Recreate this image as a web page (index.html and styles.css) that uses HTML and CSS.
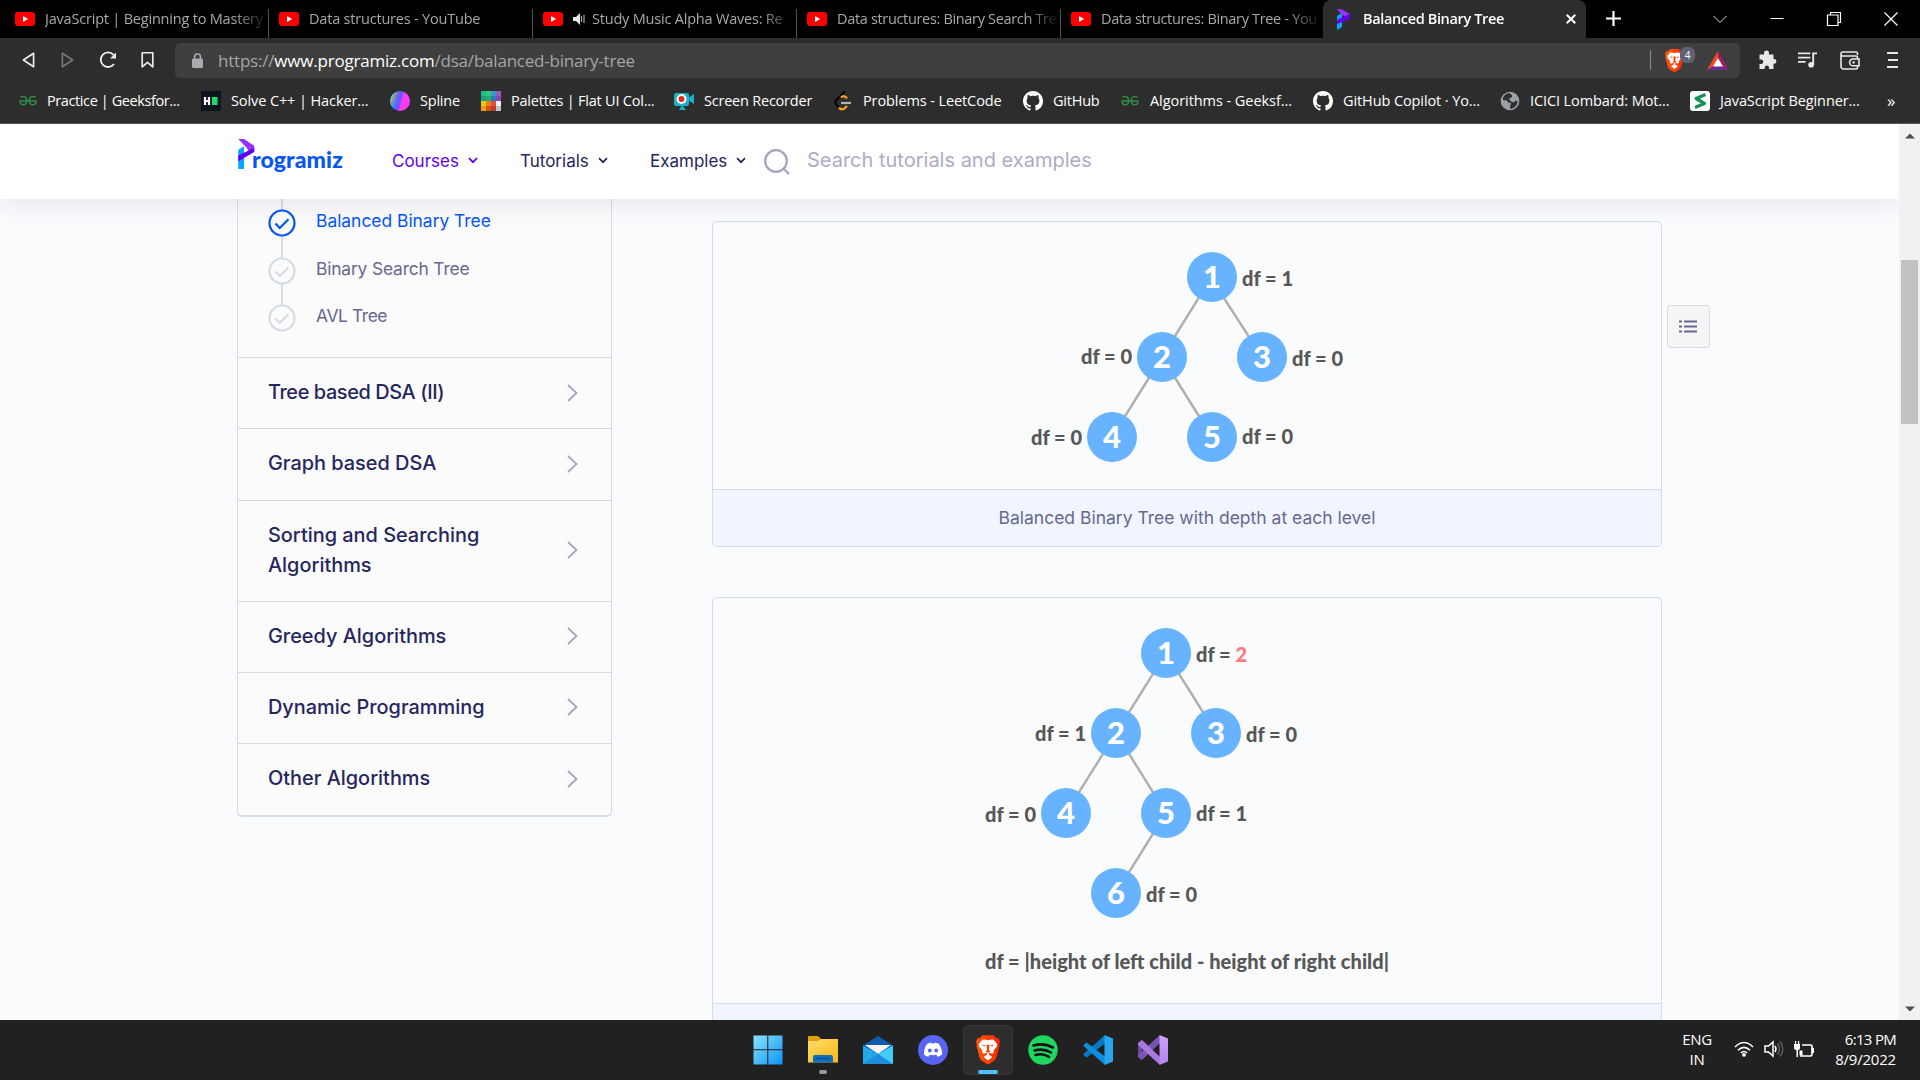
FILE: index.html
```html
<!DOCTYPE html>
<html lang="en">
<head>
<meta charset="utf-8">
<title>Balanced Binary Tree</title>
<link rel="stylesheet" href="styles.css">
</head>
<body>
<svg width="0" height="0" class="defs" aria-hidden="true">
  <defs>
    <linearGradient id="gWin" x1="0" y1="0" x2="1" y2="1"><stop offset="0" stop-color="#8be4ff"/><stop offset="1" stop-color="#0b93f5"/></linearGradient>
    <linearGradient id="gFolder" x1="0" y1="0" x2="1" y2="1"><stop offset="0" stop-color="#ffdc6b"/><stop offset="1" stop-color="#fbb914"/></linearGradient>
    <linearGradient id="gBrave" x1="0" y1="0" x2="1" y2="0"><stop offset="0" stop-color="#ff5a0a"/><stop offset="1" stop-color="#fb2500"/></linearGradient>
    <linearGradient id="gSpline" x1="0" y1="0" x2="1" y2=".3"><stop offset="0" stop-color="#ffd84a"/><stop offset=".22" stop-color="#25d6e6"/><stop offset=".42" stop-color="#4a70ff"/><stop offset=".6" stop-color="#7a4dff"/><stop offset=".72" stop-color="#ff3cf0"/><stop offset="1" stop-color="#f63cf5"/></linearGradient>
    <linearGradient id="gVs" x1="0" y1="0" x2="0" y2="1"><stop offset="0" stop-color="#c9a2fb"/><stop offset="1" stop-color="#b583ee"/></linearGradient>
    <symbol id="youtube" viewBox="0 0 20 14"><rect width="20" height="14" rx="3" fill="#f00"/><path d="M8 4l5.200 3L8 10z" fill="#fff"/></symbol>
    <symbol id="gfg" viewBox="0 0 18 11"><g fill="none" stroke="#2f8d46" stroke-width="1.500"><path d="M1.500 2.200C3.500.8 7.600 1 7.600 5.400 7.600 8.400 6 9.800 4.200 9.800 2.200 9.800 1 8.200 1 5.900H17C17 8.200 15.800 9.800 13.800 9.800 12 9.800 10.400 8.400 10.400 5.400 10.400 1 14.500.8 16.500 2.200"/></g></symbol>
    <symbol id="github" viewBox="0 0 16 16"><path fill="#fff" d="M8 0C3.580 0 0 3.580 0 8c0 3.540 2.290 6.530 5.470 7.590.4.070.55-.17.55-.38 0-.19-.01-.82-.01-1.490-2.010.37-2.530-.49-2.690-.94-.09-.23-.48-.94-.82-1.130-.28-.15-.68-.52-.01-.53.63-.01 1.080.58 1.230.82.72 1.210 1.870.87 2.330.66.07-.52.28-.87.51-1.070-1.780-.2-3.640-.89-3.640-3.950 0-.87.31-1.590.82-2.150-.08-.2-.36-1.020.08-2.120 0 0 .67-.21 2.200.82.64-.18 1.320-.27 2-.27s1.360.09 2 .27c1.530-1.040 2.200-.82 2.200-.82.44 1.100.16 1.920.08 2.120.51.56.82 1.270.82 2.150 0 3.070-1.870 3.750-3.650 3.950.29.25.54.73.54 1.480 0 1.070-.01 1.930-.01 2.200 0 .21.15.46.55.38A8.010 8.010 0 0 0 16 8c0-4.420-3.580-8-8-8z"/></symbol>
    <symbol id="brave" viewBox="0 0 24 29"><path fill="url(#gBrave)" d="M6.500 0h11l2.600 2.700L22.500 3 24 6.500l-.9 2.700.4 1.500-3 11.300c-.6 2-1.600 3-3.200 4.100L12 29.500l-5.300-3.400c-1.600-1.100-2.600-2.100-3.200-4.100L.5 10.700l.4-1.500L0 6.500 1.500 3l2.400-.3z"/><path fill="#fff" d="M12 5l3.500-.7 2.200.2 3.600 4.600-.7 2.700-3.100 3.400.5 1.600-1.700 1.800-3-1.200-.4.700v1.500l3.100 1.800v.7L12 25.300l-4-3.200v-.7l3.100-1.800v-1.500l-.4-.7-3 1.200L6 16.800l.5-1.600-3.100-3.400-.7-2.700 3.600-4.600 2.200-.2z"/><path fill="url(#gBrave)" d="M5.500 9.300l4.300.9-1.600 1.100zM18.500 9.300l-4.300.9 1.600 1.100zM10.500 9.500h3l-.5 5.500 1.500 1.300-2.500 1.200-2.500-1.200L11 15z"/></symbol>
    <symbol id="check" viewBox="0 0 28 28"><circle cx="14" cy="14" r="12.500" fill="#fbfbfc" stroke="currentColor" stroke-width="2.200"/><path d="M7.500 14.500l4.200 4.500 8.800-8.800" fill="none" stroke="currentColor" stroke-width="2.200"/></symbol>
    <symbol id="down" viewBox="0 0 10 7"><path d="M1 1.200l4 4 4-4" fill="none" stroke="currentColor" stroke-width="1.700"/></symbol>
    <symbol id="right" viewBox="0 0 11 18"><path d="M1 1l8.500 8L1 17" fill="none" stroke="#a5a5bf" stroke-width="1.800"/></symbol>
  </defs>
</svg>
<div class="window">
  <header class="tabs">
    <div class="tab"><svg class="yt"><use href="#youtube"/></svg><span class="title">JavaScript | Beginning to Mastery</span></div>
    <div class="tab"><svg class="yt"><use href="#youtube"/></svg><span class="title">Data structures - YouTube</span></div>
    <div class="tab"><svg class="yt"><use href="#youtube"/></svg><svg class="sound" viewBox="0 0 12 12"><path d="M0 4h3l4-4v12L3 8H0z" fill="#e8e8e8"/><path d="M8.500 3v6M11 2v8" stroke="#aaa" stroke-width="1.200"/></svg><span class="title">Study Music Alpha Waves: Re</span></div>
    <div class="tab"><svg class="yt"><use href="#youtube"/></svg><span class="title snug">Data structures: Binary Search Tre</span></div>
    <div class="tab"><svg class="yt"><use href="#youtube"/></svg><span class="title snug">Data structures: Binary Tree - You</span></div>
    <div class="tab active">
      <svg class="pfav" viewBox="0 0 13 21"><path d="M0 7l5-3v14l-5 3z" fill="#0aa2ff"/><path d="M0 0h4l9 5-2 4-6-3z" fill="#9333ff"/><path d="M13 5v5L0 15v-4l8-4z" fill="#6200ea"/></svg>
      <span class="title">Balanced Binary Tree</span>
      <svg class="close" viewBox="0 0 10 10"><path d="M.7.7l8.600 8.600M9.300.7L.7 9.300" stroke="#fff" stroke-width="2"/></svg>
    </div>
    <svg class="plus" viewBox="0 0 15 15"><path d="M7.500 0v15M0 7.500h15" stroke="#fff" stroke-width="2.200"/></svg>
    <div class="controls">
      <svg viewBox="0 0 14 14"><path d="M.5 4l6.500 6.500L13.500 4" fill="none" stroke="#ddd"/></svg>
      <svg viewBox="0 0 14 14"><path d="M.5 6.500h13" stroke="#fff"/></svg>
      <svg viewBox="0 0 14 14"><path d="M3.500 3V.5h10v10H11M.5 3h10.500v10.500H.5z" fill="none" stroke="#fff" stroke-width="1.200"/></svg>
      <svg viewBox="0 0 14 14"><path d="M.5.5l13 13M13.500.5l-13 13" stroke="#fff" stroke-width="1.200"/></svg>
    </div>
  </header>

  <div class="toolbar">
    <svg class="back" viewBox="0 0 14 18"><path d="M12.500 1.800v14.400L1.500 9z" fill="none" stroke="#ececec" stroke-width="1.800" stroke-linejoin="round"/></svg>
    <svg class="fwd" viewBox="0 0 14 18"><path d="M1.500 1.800v14.400l11-7.200z" fill="none" stroke="#777" stroke-width="1.800" stroke-linejoin="round"/></svg>
    <svg class="reload" viewBox="0 0 18 18"><path d="M15 13a7.300 7.300 0 1 1-.5-9.200" fill="none" stroke="#ececec" stroke-width="1.800"/><path d="M17 1.500v6h-6z" fill="#ececec"/></svg>
    <svg class="mark" viewBox="0 0 14 18"><path d="M1.300 1.200h11.400v15.300L7 11.500l-5.700 5z" fill="none" stroke="#ececec" stroke-width="1.800" stroke-linejoin="round"/></svg>
    <div class="address">
      <svg class="lock" viewBox="0 0 11 15"><rect y="5.500" width="11" height="9.500" rx="1.500" fill="#a9abb0"/><path d="M2.500 6V4a3 3 0 0 1 6 0v2" fill="none" stroke="#a9abb0" stroke-width="1.600"/></svg>
      <span class="url">https://<b>www.programiz.com</b>/dsa/balanced-binary-tree</span>
      <span class="rule"></span>
      <span class="shield"><svg><use href="#brave"/></svg><em>4</em></span>
      <svg class="bat" viewBox="0 0 22 19"><path d="M11 0L0 19l6-3 5-8z" fill="#ff4724"/><path d="M11 0l11 19-6-3-5-8z" fill="#9e1f63"/><path d="M0 19h22l-6-4H6z" fill="#662d91"/><path d="M11 7l5 8.500H6z" fill="#fff"/></svg>
    </div>
    <svg class="puzzle" viewBox="0 0 18 20"><path fill="#e8e8e8" d="M6 4.500V3a2.500 2.500 0 0 1 5 0v1.500h4.500V9H16a2.300 2.300 0 0 1 0 4.800h-.5V19H11v-1.300a2 2 0 0 0-4.300 0V19H1.500v-5H3a2 2 0 0 0 0-4.500H1.500v-5z"/></svg>
    <svg class="music" viewBox="0 0 20 18"><path d="M0 2h13M0 6.500h13M0 11h8" stroke="#e8e8e8" stroke-width="1.800"/><path d="M16 14V2h4" fill="none" stroke="#e8e8e8" stroke-width="2"/><circle cx="13.800" cy="14" r="3" fill="#e8e8e8"/></svg>
    <svg class="wallet" viewBox="0 0 20 19"><path d="M17.500 4V2.500A1.500 1.500 0 0 0 16 1H3a2 2 0 0 0-2 2v12.500A2.500 2.500 0 0 0 3.500 18H16a1.500 1.500 0 0 0 1.500-1.500V15M1 3.500A1.500 1.500 0 0 0 2.500 5H16a1.500 1.500 0 0 1 1.500 1.500V8M19 8h-6a3.400 3.400 0 0 0 0 6.800h6z" fill="none" stroke="#e8e8e8" stroke-width="1.600"/><circle cx="13.600" cy="11.400" r="1.200" fill="#e8e8e8"/></svg>
    <svg class="menu" viewBox="0 0 11 16"><path d="M0 1h11M1 8h10M0 15h11" stroke="#e8e8e8" stroke-width="1.800"/></svg>
  </div>

  <nav class="bookmarks">
    <a><svg class="wide" viewBox="0 0 18 11"><use href="#gfg"/></svg><span class="t-geeks">Practice | Geeksfor...</span></a>
    <a><svg viewBox="0 0 20 20"><rect width="20" height="20" fill="#0e141e"/><path d="M4 6v8M8 6v8M4 10h4" stroke="#fff" stroke-width="2.200"/><rect x="11" y="6" width="5.500" height="8" fill="#1ddb68"/></svg><span class="t-leet">Solve C++ | Hacker...</span></a>
    <a><svg viewBox="0 0 20 20"><circle cx="10" cy="10" r="10" fill="url(#gSpline)"/><path d="M1.500 13C3 9 4 4 8 2" stroke="#ff5a5a" stroke-width="1.500" fill="none"/></svg><span>Spline</span></a>
    <a><svg viewBox="0 0 20 20" shape-rendering="crispEdges"><path d="M0 0h5v5H0z" fill="#1abc9c"/><path d="M5 0h5v5H5z" fill="#2ecc71"/><path d="M10 0h5v5h-5z" fill="#3498db"/><path d="M15 0h5v5h-5z" fill="#9b59b6"/><path d="M0 5h5v5H0z" fill="#16a085"/><path d="M5 5h5v5H5z" fill="#27ae60"/><path d="M10 5h5v5h-5z" fill="#2980b9"/><path d="M15 5h5v5h-5z" fill="#8e44ad"/><path d="M0 10h5v5H0z" fill="#f1c40f"/><path d="M5 10h5v5H5z" fill="#e67e22"/><path d="M10 10h5v5h-5z" fill="#e74c3c"/><path d="M15 10h5v5h-5z" fill="#ecf0f1"/><path d="M0 15h5v5H0z" fill="#f39c12"/><path d="M5 15h5v5H5z" fill="#d35400"/><path d="M10 15h5v5h-5z" fill="#c0392b"/><path d="M15 15h5v5h-5z" fill="#bdc3c7"/></svg><span>Palettes | Flat UI Col...</span></a>
    <a><svg viewBox="0 0 20 20"><rect y="2" width="15" height="13" rx="2" fill="#1aafc4"/><path d="M14 7l6-4v10l-6-4zM8 14l4 5H5z" fill="#1aafc4"/><circle cx="7.500" cy="8" r="5" fill="#fff"/><circle cx="7.500" cy="8" r="3" fill="#e0281c"/></svg><span>Screen Recorder</span></a>
    <a><svg viewBox="0 0 20 20"><path d="M12 .5L3 9.500q-1.500 2 0 4l4 4" fill="none" stroke="#050505" stroke-width="2.200"/><path d="M6 16.500q3 4 7-.5l1-1M8 6.500q3-3 6 1" fill="none" stroke="#ffa116" stroke-width="2.200"/><path d="M8 12h10" stroke="#b3b3b3" stroke-width="2.200"/></svg><span class="t-leet">Problems - LeetCode</span></a>
    <a><svg><use href="#github"/></svg><span>GitHub</span></a>
    <a><svg class="wide" viewBox="0 0 18 11"><use href="#gfg"/></svg><span class="t-algo">Algorithms - Geeksf...</span></a>
    <a><svg><use href="#github"/></svg><span class="t-leet">GitHub Copilot · Yo...</span></a>
    <a><svg viewBox="0 0 20 20"><circle cx="10" cy="10" r="9.300" fill="#9aa0a6"/><path d="M9 2c-4 1-6.500 4-6 7l4 .5 1 2 3 .5-1 4 .5 2c4-1 7-4 7-7.500l-2-1-1.500 2-3-1-2-3 3-1.500V4z" fill="#2f2f2f"/></svg><span class="t-leet">ICICI Lombard: Mot...</span></a>
    <a><svg viewBox="0 0 20 20"><rect width="20" height="20" rx="3" fill="#fff"/><path d="M15.500 3.500L6 7.500l8.500 5L5 16.500" fill="none" stroke="#16915a" stroke-width="3.200" stroke-linejoin="round"/></svg><span class="t-leet">JavaScript Beginner...</span></a>
    <a class="more">»</a>
  </nav>

  <div class="viewport">
    <div class="page">
      <header class="site-nav">
        <div class="logo"><svg viewBox="0 0 17 31"><path d="M0 11l6-3.500V31H0z" fill="#0aa2ff"/><path d="M0 0h6l10.500 7v6L12 14.500l-3-5z" fill="#9333ff"/><path d="M0 17l16.500-8v4.500L0 23z" fill="#6200ea"/></svg><span>rogramiz</span></div>
        <a class="link courses">Courses<svg><use href="#down"/></svg></a>
        <a class="link tutorials">Tutorials<svg><use href="#down"/></svg></a>
        <a class="link examples">Examples<svg><use href="#down"/></svg></a>
        <svg class="search" viewBox="0 0 26 26"><circle cx="12" cy="12" r="10.800" fill="none" stroke="#a5a5bf" stroke-width="2.200"/><path d="M19 19l6 6" stroke="#a5a5bf" stroke-width="2.400"/></svg>
        <span class="placeholder">Search tutorials and examples</span>
      </header>
      <main class="content">
        <aside class="sidebar">
          <ul class="lessons">
            <li class="current"><svg><use href="#check"/></svg><span>Balanced Binary Tree</span></li>
            <li><svg><use href="#check"/></svg><span>Binary Search Tree</span></li>
            <li><svg><use href="#check"/></svg><span class="avl">AVL Tree</span></li>
          </ul>
          <div class="chapter"><span class="tight">Tree based DSA (II)</span><svg><use href="#right"/></svg></div>
          <div class="chapter"><span>Graph based DSA</span><svg><use href="#right"/></svg></div>
          <div class="chapter tall"><span>Sorting and Searching Algorithms</span><svg><use href="#right"/></svg></div>
          <div class="chapter"><span>Greedy Algorithms</span><svg><use href="#right"/></svg></div>
          <div class="chapter"><span>Dynamic Programming</span><svg><use href="#right"/></svg></div>
          <div class="chapter"><span>Other Algorithms</span><svg><use href="#right"/></svg></div>
        </aside>
        <section class="article">
          <figure>
            <svg class="tree" width="948" height="267" viewBox="713 222 948 267">
              <path class="edge" d="M1112 437L1162 357L1211 278L1262 357M1162 357L1212 437"/>
              <g class="node"><circle cx="1212" cy="277" r="25"/><circle cx="1162" cy="357" r="25"/><circle cx="1262" cy="357" r="25"/><circle cx="1112" cy="437" r="25"/><circle cx="1212" cy="437" r="25"/>
              <text x="1212" y="288">1</text><text x="1162" y="368">2</text><text x="1262" y="368">3</text><text x="1112" y="448">4</text><text x="1212" y="448">5</text></g>
              <g class="depth"><text x="1242" y="285.500" textLength="51">df = 1</text><text x="1081" y="364" textLength="51">df = 0</text><text x="1292" y="365.500" textLength="51">df = 0</text><text x="1031" y="445" textLength="51">df = 0</text><text x="1242" y="444" textLength="51">df = 0</text></g>
            </svg>
            <figcaption>Balanced Binary Tree with depth at each level</figcaption>
          </figure>
          <figure>
            <svg class="tree" width="948" height="405" viewBox="713 598 948 405">
              <path class="edge" d="M1066 813L1166 653L1216 733M1116 733L1166 813L1116 893"/>
              <g class="node"><circle cx="1166" cy="653" r="25"/><circle cx="1116" cy="733" r="25"/><circle cx="1216" cy="733" r="25"/><circle cx="1066" cy="813" r="25"/><circle cx="1166" cy="813" r="25"/><circle cx="1116" cy="893" r="25"/>
              <text x="1166" y="664">1</text><text x="1116" y="744">2</text><text x="1216" y="744">3</text><text x="1066" y="824">4</text><text x="1166" y="824">5</text><text x="1116" y="904">6</text></g>
              <g class="depth"><text x="1196" y="661.500" textLength="51">df = <tspan class="bad">2</tspan></text><text x="1035" y="740.500" textLength="51">df = 1</text><text x="1246" y="741.500" textLength="51">df = 0</text><text x="985" y="821.500" textLength="51">df = 0</text><text x="1196" y="820.500" textLength="51">df = 1</text><text x="1146" y="901.500" textLength="51">df = 0</text><text x="985" y="969" textLength="404">df = |height of left child - height of right child|</text></g>
            </svg>
            <figcaption></figcaption>
          </figure>
        </section>
        <div class="toc"><svg viewBox="0 0 18 13"><path d="M0 1.500h3M5 1.500h13M0 6.500h3M5 6.500h13M0 11.500h3M5 11.500h13" stroke="#66688f" stroke-width="2"/></svg></div>
      </main>
    </div>
    <div class="scrollbar">
      <svg viewBox="0 0 10 6"><path d="M0 5.500L5 .5l5 5z" fill="#505050"/></svg>
      <div class="thumb"></div>
      <svg class="end" viewBox="0 0 10 6"><path d="M0 .5l5 5 5-5z" fill="#505050"/></svg>
    </div>
  </div>

  <footer class="taskbar">
    <div class="apps">
      <div class="app"><svg viewBox="0 0 30 30"><path d="M.5.500h13.800v13.800H.5zM15.300.500h14.200v13.800H15.300zM.5 15.300h13.800v14.200H.5zM15.300 15.300h14.200v14.200H15.300z" fill="url(#gWin)"/></svg></div>
      <div class="app running"><svg viewBox="0 0 30 30"><path d="M0 2q0-1 1-1h9l3 3v5H0z" fill="#dfa00c"/><path d="M0 6h10l3-2h17v23.500H0z" fill="url(#gFolder)"/><path d="M5 27.500V22q0-2 2-2h16q2 0 2 2v5.500z" fill="#0f6fc0"/><path d="M8.500 23.500h13" stroke="#0a4d92" stroke-width="1.300"/></svg></div>
      <div class="app"><svg viewBox="0 0 30 30"><path d="M0 10.500L15 1l15 9.500V20H0z" fill="#0f5cae"/><path d="M2 10h26L15 19z" fill="#f5f5f5"/><path d="M0 10.500l15 8.500 15-8.500V29H0z" fill="#23a8ea"/><path d="M15 19l15-8.500V29z" fill="#42cdf6"/><path d="M0 29l15-10 15 10z" fill="#1b8fdc"/></svg></div>
      <div class="app"><svg viewBox="0 0 30 30"><circle cx="15" cy="15" r="15" fill="#5865f2"/><path d="M9 9q2.500-1.500 4-1.500l.6 1h2.800l.6-1q1.500 0 4 1.500 3.500 5.500 3 10.500-2 1.700-4.500 2.300l-1.200-2q-3.300.9-6.600 0l-1.200 2Q8 21.200 6 19.500 5.500 14 9 9z" fill="#fff"/><circle cx="11.800" cy="15.500" r="1.900" fill="#5865f2"/><circle cx="18.200" cy="15.500" r="1.900" fill="#5865f2"/></svg></div>
      <div class="app focused"><svg viewBox="-3 0 30 30"><use href="#brave" width="24" height="29.500"/></svg></div>
      <div class="app"><svg viewBox="0 0 30 30"><circle cx="15" cy="15" r="14.700" fill="#1ed760"/><path d="M5.500 10.500q10-3 19.500 2M6.500 15.500q9-2.500 16.500 2M7.500 20q7-2 13.500 1.800" fill="none" stroke="#111" stroke-width="2.600" stroke-linecap="round"/></svg></div>
      <div class="app"><svg viewBox="0 0 30 30"><path d="M22 0L1 18.500q-1 1 0 2L3.500 22.500 22 8.500z" fill="#0a79c4"/><path d="M22 30L1 11.500q-1-1 0-2L3.500 7.500 22 21.500z" fill="#0a90dc"/><path d="M21.500 0L30 3.500v23L21.500 30z" fill="#27a6f2"/></svg></div>
      <div class="app"><svg viewBox="0 0 30 30"><path d="M0 8l4-3v20l-4-3z" fill="#6b4a9f"/><path d="M22 0v8L4 25l-4-3v-2z" fill="#7a54b3"/><path d="M0 8l4-3 18 17v8L0 10z" fill="#a87ae0"/><path d="M21.500 0L30 3.500v23L21.500 30z" fill="url(#gVs)"/></svg></div>
    </div>
    <div class="tray">
      <div class="lang">ENG<br>IN</div>
      <svg class="wifi" viewBox="0 0 20 16"><path d="M1 6q9-9 18 0M4 9.300q6-6 12 0M6.800 12q3.200-3 6.400 0" fill="none" stroke="#fff" stroke-width="1.600"/><circle cx="10" cy="13.800" r="1.900" fill="#fff"/></svg>
      <svg class="speaker" viewBox="0 0 20 18"><path d="M1 6h3.500L9 2v14l-4.500-4H1z" fill="none" stroke="#fff" stroke-width="1.500"/><path d="M11 6q2 3 0 6" fill="none" stroke="#fff" stroke-width="1.500"/><path d="M13.500 3.500q4 5.500 0 11M16 1.500q5.500 7.500 0 15" fill="none" stroke="#666" stroke-width="1.300"/></svg>
      <svg class="battery" viewBox="0 0 20 17"><path d="M8 4h8.500q1.500 0 1.500 1.500v8q0 1.500-1.500 1.500H6" fill="none" stroke="#fff" stroke-width="1.700"/><path d="M18 7h2v5h-2zM0 3h6v4q0 2-2 2v7H2.500V9Q0 9 0 7zM1 0h1.200v3H1zM4 0h1.200v3H4zM5.500 9.500h3v5h-3z" fill="#fff"/></svg>
      <div class="clock"><span>6:13 PM</span><br>8/9/2022</div>
    </div>
  </footer>
</div>
</body>
</html>
```
FILE: styles.css
```css
* { box-sizing: border-box; }
body { margin: 0; background: #212121; font-family: "Open Sans", sans-serif; }
svg { display: block; flex: none; overflow: visible; }
.defs { position: absolute; }
.window { display: flex; flex-direction: column; width: 1920px; height: 1080px; overflow: hidden; }

/* Tab strip */
.tabs { display: flex; height: 38px; padding-left: 5px; background: #000; }
.tab { display: flex; align-items: center; width: 264px; height: 38px; padding: 0 1px 0 10px; color: #a8a8a8; font-size: 14.5px; letter-spacing: -.2px; background: linear-gradient(#555, #555) right bottom / 1px 29px no-repeat; }
.tab:nth-child(5) { background: none; width: 262px; }
.yt { width: 20px; height: 14px; margin-right: 10px; }
.sound { width: 12px; height: 12px; margin-right: 7px; }
.title { flex: 1; min-width: 0; padding-bottom: 1px; white-space: nowrap; -webkit-mask-image: linear-gradient(to right, #000 calc(100% - 34px), transparent); mask-image: linear-gradient(to right, #000 calc(100% - 34px), transparent); }
.title.snug { letter-spacing: -.33px; }
.tab.active { width: 263px; padding: 0 10px 0 14px; color: #fff; font-weight: 600; letter-spacing: -.36px; background: #2d2d2d; border-radius: 8px 8px 0 0; }
.pfav { width: 13px; height: 21px; margin-right: 13px; }
.close { width: 10px; height: 10px; }
.plus { width: 15px; height: 15px; margin: 11px 0 0 20px; }
.controls { display: flex; gap: 43px; margin: 12px 22px 0 auto; }
.controls svg { width: 14px; height: 14px; }

/* Toolbar */
.toolbar { display: flex; align-items: center; height: 46px; padding: 0 22px 2px; background: #2d2d2d; }
.back { width: 13px; height: 18px; }
.fwd { width: 13px; height: 18px; margin-left: 26px; }
.reload { width: 18px; height: 18px; margin-left: 25px; }
.mark { width: 13px; height: 18px; margin-left: 24px; }
.address { display: flex; align-items: center; width: 1565px; height: 35px; margin-left: 21px; padding: 0 11px 0 17px; border-radius: 5px; background: #3f3f3f; }
.lock { width: 11px; height: 15px; }
.url { margin-left: 15px; color: #a6a6a6; font-size: 17px; letter-spacing: -.21px; white-space: nowrap; }
.url b { color: #fff; font-weight: 400; }
.rule { width: 1px; height: 20px; margin-left: auto; background: #8a8a8a; }
.shield { position: relative; margin: 0 23px 0 14px; }
.shield svg { width: 19px; height: 23px; }
.shield em { position: absolute; left: 15px; top: -2px; width: 15px; height: 16px; border-radius: 6px; background: #5f6275; color: #fff; font: 10px/16px "Open Sans", sans-serif; text-align: center; }
.bat { width: 22px; height: 19px; }
.puzzle { width: 18px; height: 20px; margin-left: 18px; }
.music { width: 19px; height: 18px; margin-left: 22px; }
.wallet { width: 20px; height: 19px; margin-left: 23px; }
.menu { width: 11px; height: 16px; margin-left: auto; }

/* Bookmarks */
.bookmarks { display: grid; grid-template-columns: 183px 189px 91px 193px 159px 190px 97px 193px 187px 190px 197px 20px; align-items: center; height: 40px; padding: 0 0 6px 18px; border-bottom: 1px solid #555; background: #2d2d2d; color: #fff; font-size: 14.5px; letter-spacing: -.22px; white-space: nowrap; }
.bookmarks a { display: flex; align-items: center; gap: 10px; }
.bookmarks svg { width: 20px; height: 20px; }
.bookmarks svg.wide { width: 18px; height: 11px; margin: 0 1px; }
.bookmarks .t-geeks { margin-left: -1px; letter-spacing: -.4px; }
.bookmarks .t-algo { letter-spacing: -.06px; }
.bookmarks .t-leet { letter-spacing: -.1px; }
.more { font-size: 17px; }

/* Web page */
.viewport { display: flex; height: 896px; }
.page { width: 1899px; background: #f9fbfd; font-family: Inter, sans-serif; overflow: hidden; }
.site-nav { position: relative; display: flex; align-items: center; height: 75px; padding: 0 0 2px 237px; background: #fff; box-shadow: 0 4px 24px rgba(37, 38, 94, .1); }
.logo { display: flex; align-items: flex-start; width: 155px; height: 43px; }
.logo svg { width: 17px; height: 30px; margin: 0 -3px 0 1px; }
.logo span { margin-top: 5px; color: #0556f3; font: 900 23px/30px Lato, sans-serif; letter-spacing: .1px; }
.link { display: flex; align-items: center; gap: 9px; color: #25265e; font-size: 17px; }
.link svg { width: 10px; height: 7px; }
.courses { width: 128px; color: #6200ea; }
.tutorials { width: 130px; }
.examples { width: 114px; }
.search { width: 26px; height: 26px; margin-top: 2px; }
.placeholder { margin: -1px 0 0 17px; color: #acacc5; font-size: 20px; }
.content { display: flex; align-items: flex-start; height: 821px; padding-left: 237px; }
.sidebar { width: 375px; height: 618px; border: 1px solid #d3dce6; border-top: 0; border-bottom-width: 2px; border-radius: 0 0 5px 5px; background: #fbfbfc; }
.lessons { display: flex; flex-direction: column; height: 158px; margin: 0; padding: 10px 0 0 30px; list-style: none; background: linear-gradient(#d3dce6, #d3dce6) 43px 0 / 2px 110px no-repeat; }
.lessons li { display: flex; align-items: flex-start; height: 47.500px; gap: 20px; color: #66688f; font-size: 17.400px; line-height: 24px; }
.lessons li span { letter-spacing: -.17px; }
.lessons li .avl { letter-spacing: -.4px; }
.lessons svg { width: 28px; height: 28px; color: #d3dce6; }
.lessons .current { color: #0556f3; }
.lessons .current span { letter-spacing: 0; }
.lessons .current svg { color: #0556f3; }
.chapter { display: flex; align-items: center; justify-content: space-between; height: 71.250px; padding: 0 33px 1px 30px; border-top: 1px solid #d3dce6; color: #25265e; font-size: 19.900px; line-height: 30px; font-weight: 450; }
.chapter span { margin-top: -1px; }
.chapter.tall { height: 101px; }
.chapter.tall span { width: 240px; margin-top: 0; }
.chapter .tight { letter-spacing: -.4px; }
.chapter svg { width: 11px; height: 18px; }
.article { width: 950px; margin-left: 100px; padding-top: 22px; }
figure { margin: 0 0 50px; border: 1px solid #d3dce6; border-radius: 5px; overflow: hidden; }
figcaption { height: 57px; border-top: 1px solid #d3dce6; background: #f0f5ff; color: #66688f; font-size: 17.500px; line-height: 56px; text-align: center; }
.edge { fill: none; stroke: #afafaf; stroke-width: 2.400; }
.node circle { fill: #68b3ff; }
.node text { fill: #fff; font: 900 31px Lato, sans-serif; text-anchor: middle; }
.depth text { fill: #575757; font: 900 20px Lato, sans-serif; }
.depth .bad { fill: #ff7a7f; }
.toc { display: flex; align-items: center; justify-content: center; width: 43px; height: 43px; margin: 106px 0 0 5px; padding-right: 1px; border: 1px solid #d3dce6; border-radius: 3px; background: #f5f5f5; }
.toc svg { width: 18px; height: 13px; }
.scrollbar { display: flex; flex-direction: column; align-items: center; width: 21px; background: #f1f1f1; }
.scrollbar svg { width: 10px; height: 6px; margin-top: 9px; }
.thumb { width: 17px; height: 164px; margin-top: 121px; background: #c1c1c1; }
.scrollbar .end { margin: auto 0 8px; }

/* Taskbar */
.taskbar { display: grid; grid-template-columns: 738px 440px 1fr; height: 60px; background: #212121; color: #fff; }
.apps { grid-column: 2; display: grid; grid-template-columns: repeat(8, 55px); padding-top: 5px; }
.app { position: relative; display: flex; justify-content: center; align-items: center; width: 50px; height: 50px; margin-left: 5px; border-radius: 5px; }
.app svg { width: 30px; height: 30px; }
.app:first-child { width: 49px; }
.app.focused { background: #2d2d2d; border: 1px solid #383838; }
.running::after, .focused::after { content: ""; position: absolute; bottom: 1px; width: 8px; height: 4px; border-radius: 2px; background: #9a9a9a; }
.focused::after { bottom: 0; width: 20px; background: #4cc2ff; }
.tray { display: flex; align-items: center; justify-content: flex-end; padding: 0 24px 2px 0; font-size: 15px; line-height: 20px; }
.lang { width: 34px; text-align: center; letter-spacing: -.3px; }
.wifi { width: 20px; height: 16px; margin-left: 20px; }
.speaker { width: 20px; height: 18px; margin-left: 10px; }
.battery { width: 20px; height: 17px; margin-left: 10px; }
.clock { width: 82px; text-align: right; letter-spacing: -.2px; }
.clock span { letter-spacing: -.7px; }
```
